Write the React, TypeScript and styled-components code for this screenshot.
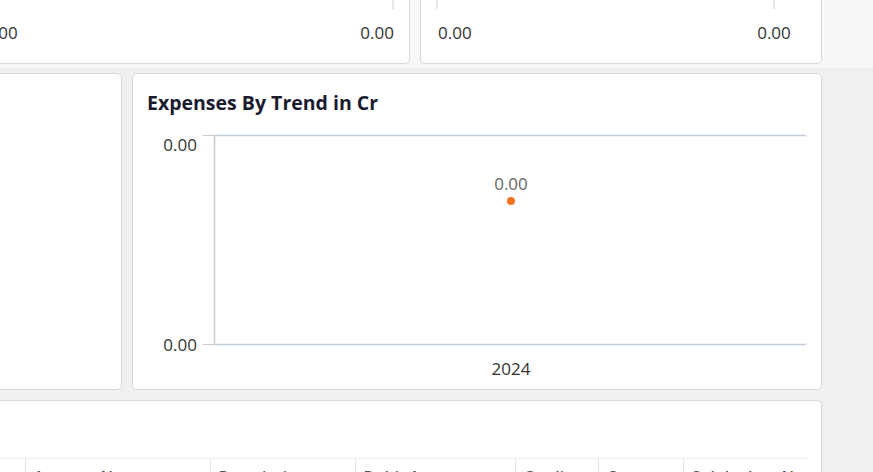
import React from 'react';
import styled, { createGlobalStyle } from 'styled-components';

const GlobalStyle = createGlobalStyle`
  html, body {
    margin: 0;
    padding: 0;
    background: #f0f0f0;
    font-family: "Open Sans", "Noto Sans", Arial, sans-serif;
    color: #333;
  }
`;

const Viewport = styled.div`
  width: 873px;
  height: 472px;
  overflow: hidden;
  background: #f0f0f0;
`;

const Canvas = styled.div`
  margin-left: -34px;
  width: 856px;
`;

const TopSection = styled.section`
  margin-top: -36px;
  padding-bottom: 4px;
  background: #f7f7f7;
  width: 907px;
  display: grid;
  grid-template-columns: 444px 402px;
  column-gap: 10px;
`;

const MainSection = styled.section`
  padding-top: 5px;
  display: flex;
  flex-direction: column;
  gap: 10px;
`;

const Row = styled.div`
  display: grid;
  grid-template-columns: 1fr 690px;
  column-gap: 10px;
`;

const Card = styled.div<{ $height?: number }>`
  background: #fff;
  border: 1px solid #d8d8d8;
  border-radius: 5px;
  box-sizing: border-box;
  height: ${(p) => (p.$height ? `${p.$height}px` : 'auto')};
  overflow: hidden;
`;

const ChartCard = styled(Card)`
  padding: 16px 14px 0;
`;

const Title = styled.h3`
  margin: 0;
  font-size: 19.5px;
  font-weight: 700;
  color: #1b1b2f;
  line-height: 26px;
`;

const ChartSvg = styled.svg`
  display: block;
  margin-top: 9px;
  font-family: "Open Sans", "Noto Sans", Arial, sans-serif;
  font-size: 17px;
`;

const TableCard = styled(Card)`
  padding: 57px 14px 0 0;
`;

const Table = styled.table`
  width: 100%;
  border-collapse: collapse;
  table-layout: fixed;
  border-top: 1px solid #ececec;
`;

const Th = styled.th<{ $w: number }>`
  box-sizing: border-box;
  width: ${(p) => p.$w}px;
  border-left: 1px solid #e4e4e4;
  padding: 7px 8px 6px;
  text-align: left;
  font-size: 16px;
  font-weight: 600;
  color: #555;
  white-space: nowrap;
  overflow: hidden;
  &:first-child {
    border-left: none;
  }
`;

type AxisProps = { width: number; left: number; right: number; rightAnchor: 'end' | 'middle' };

const TickAxis: React.FC<AxisProps> = ({ width, left, right, rightAnchor }) => (
  <svg width={width} height={100} style={{ display: 'block' }}>
    <line x1={left} y1={30} x2={left} y2={44} stroke="#cfcfcf" strokeWidth={1} />
    <line x1={right} y1={30} x2={right} y2={44} stroke="#cfcfcf" strokeWidth={1} />
    <text x={left + 1} y={74} fontSize={17} fill="#333" fontFamily="Open Sans, Noto Sans, sans-serif">
      0.00
    </text>
    <text
      x={rightAnchor === 'end' ? right + 1 : right}
      y={74}
      fontSize={17}
      fill="#333"
      textAnchor={rightAnchor}
      fontFamily="Open Sans, Noto Sans, sans-serif"
    >
      0.00
    </text>
  </svg>
);

const TrendChart: React.FC = () => (
  <ChartSvg width={662} height={270}>
    <text x={50} y={26} textAnchor="end" fill="#333">0.00</text>
    <text x={50} y={226} textAnchor="end" fill="#333">0.00</text>
    <line x1={56} y1={10.5} x2={67} y2={10.5} stroke="#cccccc" />
    <line x1={56} y1={219.5} x2={67} y2={219.5} stroke="#cccccc" />
    <line x1={67.5} y1={10} x2={67.5} y2={220} stroke="#cccccc" strokeWidth={1.5} />
    <line x1={67} y1={10.5} x2={659} y2={10.5} stroke="#c3cfdc" strokeWidth={1.5} />
    <line x1={67} y1={219.5} x2={659} y2={219.5} stroke="#c3cfdc" strokeWidth={1.5} />
    <text x={364} y={65} textAnchor="middle" fill="#666">0.00</text>
    <circle cx={364} cy={76} r={4} fill="#f37321" />
    <text x={364} y={250} textAnchor="middle" fill="#333">2024</text>
  </ChartSvg>
);

const columns = [
  { w: 58, label: '#' },
  { w: 185, label: 'Account Name' },
  { w: 145, label: 'Description' },
  { w: 160, label: 'Debit Amount' },
  { w: 83, label: 'Credit' },
  { w: 85, label: 'Count' },
  { w: 124, label: 'Sub Ledger Name' },
];

export default function App() {
  return (
    <Viewport>
      <GlobalStyle />
      <Canvas>
        <TopSection>
          <Card $height={100}>
            <TickAxis width={444} left={16} right={426} rightAnchor="end" />
          </Card>
          <Card $height={100}>
            <TickAxis width={402} left={16} right={353} rightAnchor="middle" />
          </Card>
        </TopSection>
        <MainSection>
          <Row>
            <Card $height={317} />
            <ChartCard $height={317}>
              <Title>Expenses By Trend in Cr</Title>
              <TrendChart />
            </ChartCard>
          </Row>
          <TableCard $height={120}>
            <Table>
              <thead>
                <tr>
                  {columns.map((c) => (
                    <Th key={c.label} $w={c.w}>
                      {c.label}
                    </Th>
                  ))}
                </tr>
              </thead>
            </Table>
          </TableCard>
        </MainSection>
      </Canvas>
    </Viewport>
  );
}
